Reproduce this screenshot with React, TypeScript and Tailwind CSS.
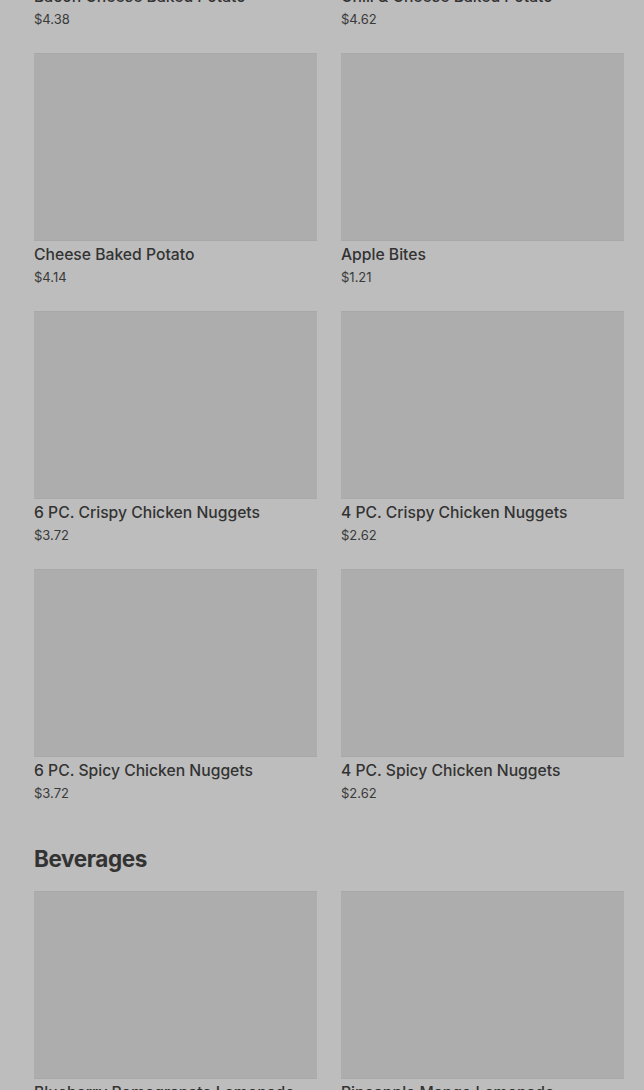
import React from 'react';

interface Item {
  name: string;
  price: string;
}

const sides: Item[] = [
  { name: 'Bacon Cheese Baked Potato', price: '$4.38' },
  { name: 'Chili & Cheese Baked Potato', price: '$4.62' },
  { name: 'Cheese Baked Potato', price: '$4.14' },
  { name: 'Apple Bites', price: '$1.21' },
  { name: '6 PC. Crispy Chicken Nuggets', price: '$3.72' },
  { name: '4 PC. Crispy Chicken Nuggets', price: '$2.62' },
  { name: '6 PC. Spicy Chicken Nuggets', price: '$3.72' },
  { name: '4 PC. Spicy Chicken Nuggets', price: '$2.62' },
];

const beverages: Item[] = [
  { name: 'Blueberry Pomegranate Lemonade', price: '$2.49' },
  { name: 'Pineapple Mango Lemonade', price: '$2.49' },
];

const MenuCard: React.FC<{ item: Item }> = ({ item }) => (
  <div className="flex flex-col">
    <div className="h-[188px] w-full bg-[#adadad] border-y border-[#a8a8a8]" />
    <p className="mt-[2px] text-[15.7px] leading-6 font-medium text-[#333333]">
      {item.name}
    </p>
    <p className="text-[13px] leading-5 text-[#3a3a3a]">{item.price}</p>
  </div>
);

export default function App() {
  return (
    <div
      className="min-h-screen w-full bg-[#bdbdbd] overflow-hidden"
      style={{ fontFamily: 'Inter, "Noto Sans", sans-serif' }}
    >
      {/* list is scrolled: first row only shows its name and price */}
      <div className="mt-[-205px] pl-[34px] pr-[20px]">
        <div className="grid grid-cols-2 gap-x-6 gap-y-6">
          {sides.map((item) => (
            <MenuCard key={item.name} item={item} />
          ))}
        </div>

        <h2 className="mt-10 mb-4 text-[22.5px] leading-8 font-bold text-[#333333] tracking-[-0.4px]">
          Beverages
        </h2>
        <div className="grid grid-cols-2 gap-x-6 gap-y-6">
          {beverages.map((item) => (
            <MenuCard key={item.name} item={item} />
          ))}
        </div>
      </div>
    </div>
  );
}
